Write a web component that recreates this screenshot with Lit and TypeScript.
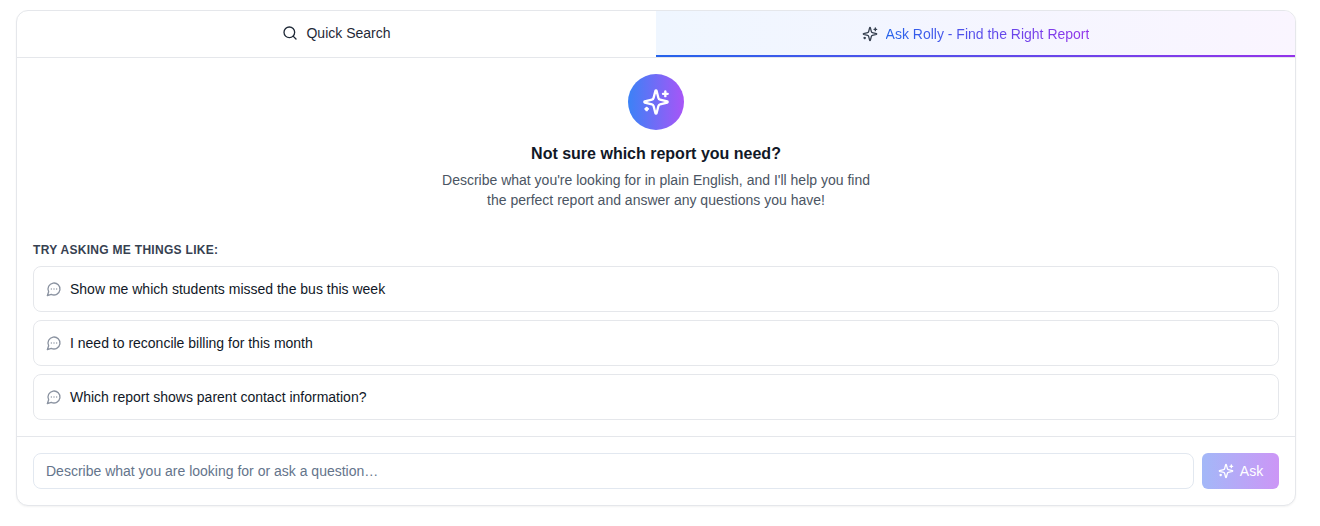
import { LitElement, html, css, svg } from "lit";
import { customElement } from "lit/decorators.js";

const sparkles = svg`<path d="M9.937 15.5A2 2 0 0 0 8.5 14.063l-6.135-1.582a.5.5 0 0 1 0-.962L8.5 9.936A2 2 0 0 0 9.937 8.5l1.582-6.135a.5.5 0 0 1 .963 0L14.063 8.5A2 2 0 0 0 15.5 9.937l6.135 1.581a.5.5 0 0 1 0 .964L15.5 14.063a2 2 0 0 0-1.437 1.437l-1.582 6.135a.5.5 0 0 1-.963 0z"/><path d="M20 3v4"/><path d="M22 5h-4"/><path d="M4 17v2"/><path d="M5 18H3"/>`;
const bubble = svg`<path d="M7.9 20A9 9 0 1 0 4 16.1L2 22Z"/><path d="M8 12h.01"/><path d="M12 12h.01"/><path d="M16 12h.01"/>`;
const search = svg`<circle cx="11" cy="11" r="8"/><path d="m21 21-4.3-4.3"/>`;

const icon = (content: unknown, cls: string) =>
  html`<svg class=${cls} viewBox="0 0 24 24" fill="none" stroke="currentColor" stroke-width="2" stroke-linecap="round" stroke-linejoin="round">${content}</svg>`;

const suggestions = [
  "Show me which students missed the bus this week",
  "I need to reconcile billing for this month",
  "Which report shows parent contact information?",
];

@customElement("app-root")
export class AppRoot extends LitElement {
  static styles = css`
    :host {
      display: block;
      padding: 10px 24px 20px 16px;
      font-family: "Liberation Sans", Arial, sans-serif;
      color: #111827;
      background: #fff;
    }
    * { box-sizing: border-box; }
    .card {
      border: 1px solid #e5e7eb;
      border-radius: 12px;
      overflow: hidden;
      background: #fff;
      box-shadow: 0 1px 2px rgba(0, 0, 0, 0.05);
    }
    .tabs {
      display: grid;
      grid-template-columns: 1fr 1fr;
      height: 47px;
      border-bottom: 1px solid #e5e7eb;
    }
    .tab {
      display: flex;
      align-items: center;
      justify-content: center;
      gap: 8px;
      height: 46px;
      padding-bottom: 2px;
      font-size: 14px;
      line-height: 20px;
      color: #1f2937;
    }
    .tab.active {
      position: relative;
      padding-bottom: 0;
      background: linear-gradient(to right, #eff6ff, #faf5ff);
      color: #374151;
    }
    .tab.active::after {
      content: "";
      position: absolute;
      left: 0;
      right: 0;
      bottom: 0;
      height: 2px;
      background: linear-gradient(to right, #2563eb, #9333ea);
    }
    .tab.active .grad {
      background: linear-gradient(to right, #2563eb, #9333ea);
      -webkit-background-clip: text;
      background-clip: text;
      color: transparent;
    }
    .i16 { width: 16px; height: 16px; flex: none; }
    .bub { width: 16px; height: 16px; flex: none; color: #8b93a1; }
    .i28 { width: 28px; height: 28px; }
    .body { padding: 16px; }
    .intro {
      display: flex;
      flex-direction: column;
      align-items: center;
      text-align: center;
      margin-bottom: 32px;
    }
    .badge {
      width: 56px;
      height: 56px;
      border-radius: 50%;
      display: flex;
      align-items: center;
      justify-content: center;
      color: #fff;
      background: linear-gradient(to right, #3b82f6, #a855f7);
      margin-bottom: 12px;
    }
    h2 {
      margin: 0 0 4px;
      font-size: 16px;
      line-height: 24px;
      font-weight: 700;
      color: #111827;
    }
    .intro p {
      margin: 0;
      max-width: 448px;
      font-size: 14px;
      line-height: 20px;
      color: #4b5563;
    }
    .label {
      font-size: 12px;
      line-height: 16px;
      font-weight: 700;
      letter-spacing: 0.3px;
      text-transform: uppercase;
      color: #374151;
      margin-bottom: 8px;
    }
    .list { display: flex; flex-direction: column; gap: 8px; }
    .row {
      height: 46px;
      display: flex;
      align-items: center;
      gap: 8px;
      padding: 0 12px;
      border: 1px solid #e5e7eb;
      border-radius: 8px;
      font-size: 14px;
      line-height: 20px;
      color: #111827;
      background: #fff;
    }
    .foot {
      display: flex;
      gap: 8px;
      padding: 16px;
      border-top: 1px solid #e5e7eb;
    }
    .field {
      flex: 1;
      height: 36px;
      padding: 0 12px;
      display: flex;
      align-items: center;
      border: 1px solid #e2e8f0;
      border-radius: 8px;
      font-size: 14px;
      color: #64748b;
      background: #fff;
    }
    .ask {
      width: 77px;
      height: 36px;
      display: flex;
      align-items: center;
      justify-content: center;
      gap: 6px;
      border-radius: 6px;
      font-size: 14px;
      color: #fff;
      background: linear-gradient(to right, #a3b8f8, #cc96f6);
    }
  `;

  render() {
    return html`
      <div class="card">
        <div class="tabs">
          <div class="tab">${icon(search, "i16")}<span>Quick Search</span></div>
          <div class="tab active">${icon(sparkles, "i16")}<span class="grad">Ask Rolly - Find the Right Report</span></div>
        </div>
        <div class="body">
          <div class="intro">
            <div class="badge">${icon(sparkles, "i28")}</div>
            <h2>Not sure which report you need?</h2>
            <p>Describe what you're looking for in plain English, and I'll help you find the perfect report and answer any questions you have!</p>
          </div>
          <div class="label">Try asking me things like:</div>
          <div class="list">
            ${suggestions.map((s) => html`<div class="row">${icon(bubble, "bub")}<span>${s}</span></div>`)}
          </div>
        </div>
        <div class="foot">
          <div class="field">Describe what you are looking for or ask a question…</div>
          <div class="ask">${icon(sparkles, "i16")}<span>Ask</span></div>
        </div>
      </div>
    `;
  }
}
